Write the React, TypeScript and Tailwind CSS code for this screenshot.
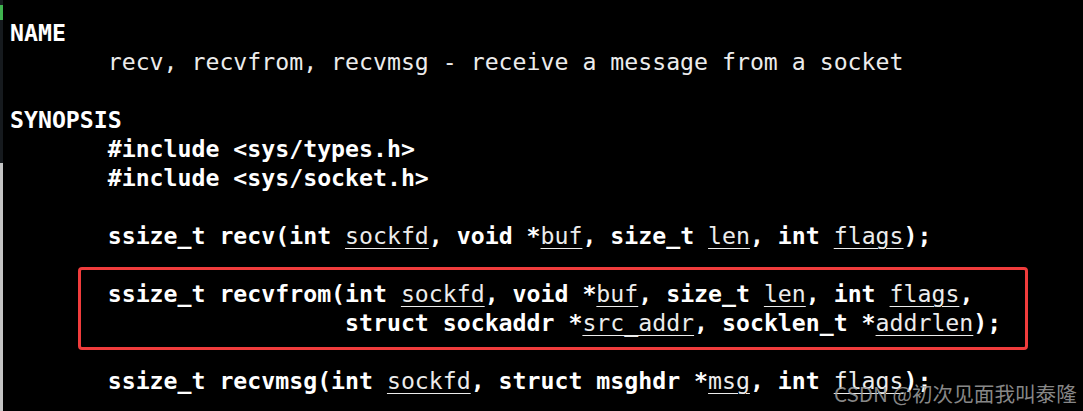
import React from 'react';

const mono = "font-['DejaVu_Sans_Mono',monospace] text-[23.2px] leading-[29px] whitespace-pre";

function Arg({ children }: { children: React.ReactNode }) {
  return (
    <span className="font-normal text-[#ececec] underline decoration-1 underline-offset-[4px]">
      {children}
    </span>
  );
}

function Line({ children, bold = false }: { children?: React.ReactNode; bold?: boolean }) {
  return (
    <div className={`h-[29px] ${bold ? 'font-bold text-white' : 'font-normal text-[#ececec]'}`}>
      {children}
    </div>
  );
}

const indent = '       ';

export default function App() {
  return (
    <div className="relative flex w-[1083px] h-[411px] overflow-hidden bg-black">
      {/* edge of the neighbouring window */}
      <div className="flex w-[3px] flex-col">
        <div className="h-[163px] bg-[#161a1e]">
          <div className="mt-[5px] h-[15px] bg-[#3fb34f]" />
        </div>
        <div className="flex-1 bg-[#c4c4c4]" />
      </div>

      <div className={`${mono} pl-[7px] pt-[18px]`}>
        <Line bold>NAME</Line>
        <Line>{indent}recv, recvfrom, recvmsg - receive a message from a socket</Line>
        <Line />
        <Line bold>SYNOPSIS</Line>
        <Line bold>{indent}#include &lt;sys/types.h&gt;</Line>
        <Line bold>{indent}#include &lt;sys/socket.h&gt;</Line>
        <Line />
        <Line bold>
          {indent}ssize_t recv(int <Arg>sockfd</Arg>, void *<Arg>buf</Arg>, size_t <Arg>len</Arg>, int{' '}
          <Arg>flags</Arg>);
        </Line>
        <Line />
        <Line bold>
          {indent}ssize_t recvfrom(int <Arg>sockfd</Arg>, void *<Arg>buf</Arg>, size_t <Arg>len</Arg>, int{' '}
          <Arg>flags</Arg>,
        </Line>
        <Line bold>
          {indent}                 struct sockaddr *<Arg>src_addr</Arg>, socklen_t *<Arg>addrlen</Arg>);
        </Line>
        <Line />
        <Line bold>
          {indent}ssize_t recvmsg(int <Arg>sockfd</Arg>, struct msghdr *<Arg>msg</Arg>, int <Arg>flags</Arg>);
        </Line>
      </div>

      {/* annotation box */}
      <div className="absolute left-[78px] top-[267px] h-[83px] w-[950px] rounded-[4px] border-[3px] border-[#f03c3c]" />

      {/* watermark */}
      <div className="absolute left-[834px] top-[379px] font-['Noto_Sans_CJK_SC',sans-serif] text-[20.6px] leading-[28px] text-[#a0a0a0]/85 whitespace-nowrap">
        CSDN @初次见面我叫泰隆
      </div>
    </div>
  );
}
